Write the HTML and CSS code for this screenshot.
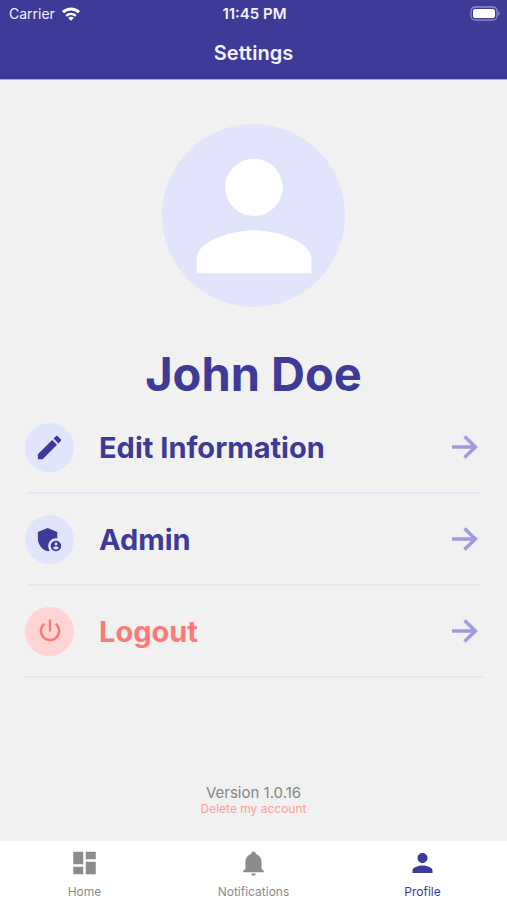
FILE: index.html
```html
<!DOCTYPE html>
<html lang="en">
<head>
  <meta charset="UTF-8">
  <meta name="viewport" content="width=device-width, initial-scale=1">
  <title>Settings</title>
  <link rel="stylesheet" href="styles.css">
</head>
<body>
  <header class="header">
    <div class="status-bar">
      <div class="carrier">
        <span>Carrier</span>
        <svg width="18" height="14" viewBox="0 0 18 14" fill="none" stroke="#fff" stroke-width="3">
          <path d="M1 5.2a11.4 11.4 0 0 1 16 0"/>
          <path d="M4.2 8.9a6.8 6.8 0 0 1 9.6 0" stroke-width="2.4"/>
          <path d="M9 13.8L6.2 11a4 4 0 0 1 5.6 0z" fill="#fff" stroke="none"/>
        </svg>
      </div>
      <span class="time">11:45 PM</span>
      <div class="battery">
        <svg width="31" height="15" viewBox="0 0 31 15">
          <rect x="2" y="1" width="26" height="13" rx="4" fill="none" stroke="#8f8bc9" stroke-width="1.3"/>
          <rect x="4" y="3" width="22" height="9" rx="2" fill="#fff"/>
          <path d="M29.2 5.2c2 .8 2 3.8 0 4.6z" fill="#8f8bc9"/>
        </svg>
      </div>
    </div>
    <h1 class="title">Settings</h1>
  </header>

  <main class="content">
    <div class="avatar">
      <svg width="172" height="172" viewBox="0 0 24 24" fill="#fff">
        <path d="M12 12c2.21 0 4-1.79 4-4s-1.79-4-4-4-4 1.79-4 4 1.79 4 4 4zm0 2c-2.67 0-8 1.34-8 4v2h16v-2c0-2.66-5.33-4-8-4z"/>
      </svg>
    </div>
    <h2 class="name">John Doe</h2>

    <ul class="menu">
      <li>
        <a class="row" href="#edit">
          <span class="row-icon">
            <svg width="31" height="31" viewBox="0 0 24 24" fill="currentColor">
              <path d="M3 17.25V21h3.75L17.81 9.94l-3.75-3.75L3 17.25zM20.71 7.04c.39-.39.39-1.02 0-1.41l-2.34-2.34c-.39-.39-1.02-.39-1.41 0l-1.83 1.83 3.75 3.75 1.83-1.83z"/>
            </svg>
          </span>
          <span class="row-label">Edit Information</span>
          <svg class="arrow" width="26" height="24" viewBox="0 0 26 24"><path d="M0 12h24M12.5 1.5L23.5 12l-11 10.5"/></svg>
        </a>
      </li>
      <li>
        <a class="row" href="#admin">
          <span class="row-icon">
            <svg width="31" height="31" viewBox="0 0 24 24" fill="currentColor">
              <path d="M17 11c.34 0 .67.04 1 .09V6.27L10.5 3 3 6.27v4.91c0 4.54 3.2 8.79 7.5 9.82.55-.13 1.08-.32 1.6-.55-.69-.98-1.1-2.17-1.1-3.45 0-3.31 2.69-6 6-6z"/>
              <path d="M17 13c-2.21 0-4 1.79-4 4s1.79 4 4 4 4-1.79 4-4-1.79-4-4-4zm0 1.38c.62 0 1.12.51 1.12 1.12s-.51 1.12-1.12 1.12-1.12-.51-1.12-1.12.5-1.12 1.12-1.12zm0 5.37c-.93 0-1.74-.46-2.24-1.17.05-.72 1.51-1.08 2.24-1.08s2.19.36 2.24 1.08c-.5.71-1.31 1.17-2.24 1.17z"/>
            </svg>
          </span>
          <span class="row-label">Admin</span>
          <svg class="arrow" width="26" height="24" viewBox="0 0 26 24"><path d="M0 12h24M12.5 1.5L23.5 12l-11 10.5"/></svg>
        </a>
      </li>
      <li>
        <a class="row danger" href="#logout">
          <span class="row-icon">
            <svg width="24" height="24" viewBox="0 0 24 24" fill="none" stroke="currentColor" stroke-width="2.4">
              <path d="M12 .5v12M6.4 4.8a9.1 9.1 0 1 0 11.2 0"/>
            </svg>
          </span>
          <span class="row-label">Logout</span>
          <svg class="arrow" width="26" height="24" viewBox="0 0 26 24"><path d="M0 12h24M12.5 1.5L23.5 12l-11 10.5"/></svg>
        </a>
      </li>
    </ul>

    <div class="footer">
      <span class="version">Version 1.0.16</span>
      <a class="delete" href="#delete">Delete my account</a>
    </div>
  </main>

  <nav class="tabs">
    <a class="tab" href="#home">
      <svg width="31" height="31" viewBox="0 0 24 24" fill="currentColor">
        <path d="M3 13h8V3H3v10zm0 8h8v-6H3v6zm10 0h8V11h-8v10zm0-18v6h8V3h-8z"/>
      </svg>
      <span>Home</span>
    </a>
    <a class="tab" href="#notifications">
      <svg width="31" height="31" viewBox="-1 -1 26 26" fill="currentColor">
        <path d="M21 19v1H3v-1l2-2v-6c0-3.1 2.03-5.83 5-6.71V4a2 2 0 0 1 4 0v.29c2.97.88 5 3.61 5 6.71v6l2 2zm-7 2a2 2 0 0 1-4 0"/>
      </svg>
      <span>Notifications</span>
    </a>
    <a class="tab active" href="#profile">
      <svg width="31" height="31" viewBox="0 0 24 24" fill="currentColor">
        <path d="M12 12c2.21 0 4-1.79 4-4s-1.79-4-4-4-4 1.79-4 4 1.79 4 4 4zm0 2c-2.67 0-8 1.34-8 4v2h16v-2c0-2.66-5.33-4-8-4z"/>
      </svg>
      <span>Profile</span>
    </a>
  </nav>
</body>
</html>
```
FILE: styles.css
```css
* {
  box-sizing: border-box;
}
body {
  display: flex;
  flex-direction: column;
  min-height: 100vh;
  margin: 0;
  background: #f1f1f1;
  color: #3d3a98;
  font-family: Inter, "Liberation Sans", sans-serif;
}
a {
  color: inherit;
  text-decoration: none;
}
svg {
  display: block;
}
.header {
  background: #3d3a98;
  border-bottom: 1px solid #aaa8cf;
  color: #f3f2ff;
}
.status-bar {
  display: grid;
  grid-template-columns: 1fr auto 1fr;
  align-items: center;
  height: 27px;
  padding: 0 7px 0 9px;
  font-size: 14px;
}
.carrier {
  display: flex;
  align-items: center;
  gap: 7px;
}
.time {
  font-size: 15px;
  font-weight: 600;
}
.battery {
  justify-self: end;
}
.title {
  margin: 0;
  font-size: 20px;
  font-weight: 600;
  line-height: 52px;
  text-align: center;
}
.content {
  flex: 1;
  display: flex;
  flex-direction: column;
  padding: 44px 24px 24px;
}
.avatar {
  display: flex;
  align-items: center;
  justify-content: center;
  align-self: center;
  width: 183px;
  height: 183px;
  border-radius: 50%;
  background: #e1e4fb;
}
.name {
  margin: 38px 0 0;
  font-size: 47px;
  font-weight: 700;
  line-height: 57px;
  text-align: center;
}
.menu {
  margin: 0;
  padding: 0;
  list-style: none;
}
.menu li {
  padding: 0 3px;
}
.menu li:last-child {
  padding: 0;
}
.row {
  display: flex;
  align-items: center;
  height: 92px;
  border-bottom: 2px solid #e6e6f7;
}
.row-icon {
  display: flex;
  align-items: center;
  justify-content: center;
  width: 49px;
  height: 49px;
  margin-left: -2px;
  border-radius: 50%;
  background: #e1e4fb;
}
.menu li:last-child .row-icon {
  margin-left: 1px;
}
.row-label {
  flex: 1;
  margin-left: 25px;
  font-size: 29px;
  font-weight: 700;
}
.arrow {
  margin-right: 2px;
  fill: none;
  stroke: #a09be0;
  stroke-width: 3.5;
}
.menu li:last-child .arrow {
  margin-right: 5px;
}
.danger {
  color: #fc7a78;
}
.danger .row-icon {
  background: #ffd4d5;
}
.footer {
  display: flex;
  flex-direction: column;
  align-items: center;
  margin-top: auto;
}
.version {
  color: #858585;
  font-size: 15px;
  line-height: 16px;
}
.delete {
  color: #fba0a0;
  font-size: 12px;
  line-height: 16px;
}
.tabs {
  display: flex;
  height: 59px;
  background: #fff;
}
.tab {
  flex: 1;
  display: flex;
  flex-direction: column;
  align-items: center;
  gap: 6px;
  padding-top: 7px;
  color: #8c8c8c;
  font-size: 12px;
  line-height: 16px;
}
.tab.active {
  color: #3d3a98;
}
```
